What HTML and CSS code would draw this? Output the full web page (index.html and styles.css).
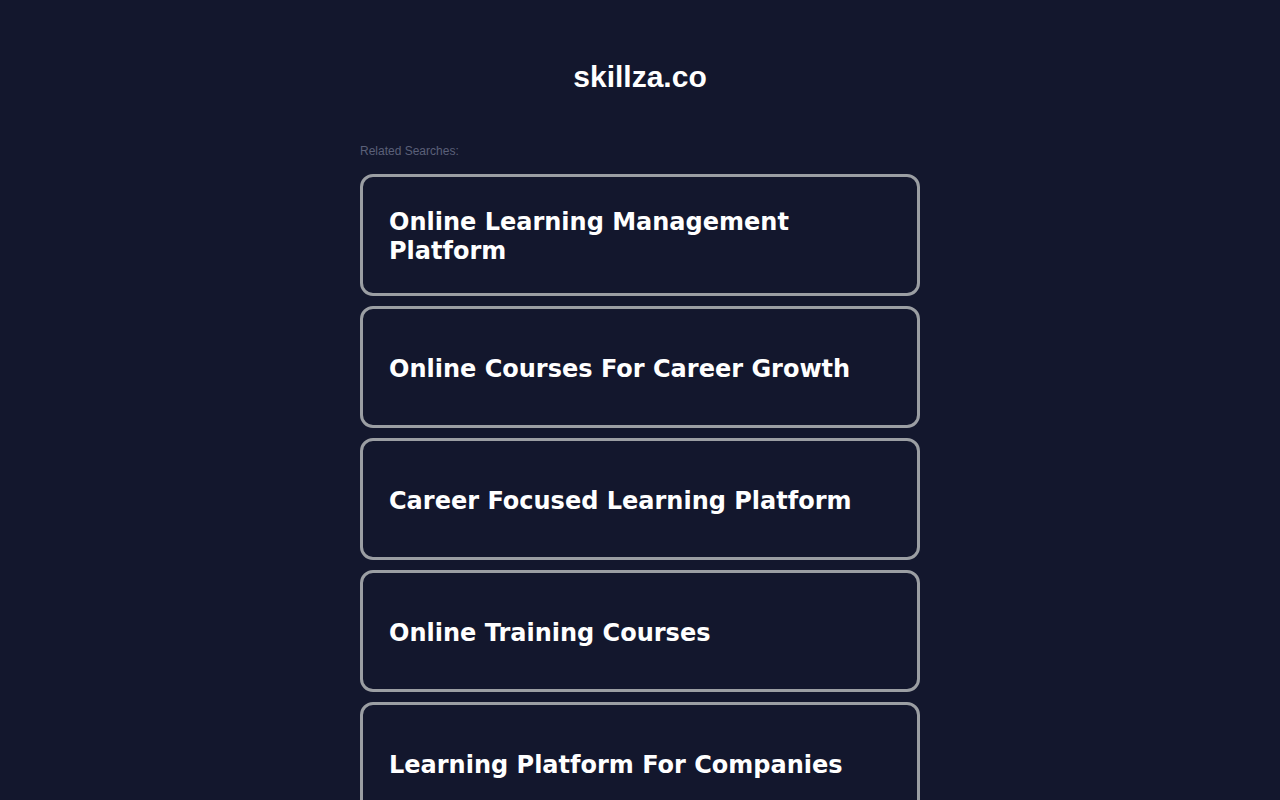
FILE: index.html
```html
<!DOCTYPE html>
<html lang="en">
<head>
  <meta charset="UTF-8" />
  <meta name="viewport" content="width=device-width, initial-scale=1.0"/>
  <title>skillza.co</title>
  <link rel="stylesheet" href="styles.css">
</head>
<body>
  <div class="page">
    <header>
      <h1>skillza.co</h1>
    </header>

    <p class="related">Related Searches:</p>

    <div class="links">
      <a class="link" href="#">Online Learning Management Platform</a>
      <a class="link" href="#">Online Courses For Career Growth</a>
      <a class="link" href="#">Career Focused Learning Platform</a>
      <a class="link" href="#">Online Training Courses</a>
      <a class="link" href="#">Learning Platform For Companies</a>
    </div>
  </div>
</body>
</html>
```

FILE: styles.css
```css
body {
  margin: 0;
  padding: 0;
  background-color: #13172d;
  color: #fff;
  font-family: 'Liberation Sans', Arial, sans-serif;
  min-height: 100vh;
}

.page {
  width: 560px;
  margin: 0 auto;
}

header {
  padding-top: 58px;
  text-align: center;
}

h1 {
  margin: 0;
  font-size: 30px;
  line-height: 38px;
  font-weight: bold;
}

.related {
  margin: 48px 0 0;
  font-size: 12px;
  line-height: 14px;
  color: #5b6079;
}

.links {
  margin-top: 16px;
  display: flex;
  flex-direction: column;
  gap: 10px;
}

.link {
  box-sizing: border-box;
  height: 122px;
  display: flex;
  align-items: center;
  padding: 4px 26px 0;
  border: 3px solid #9b9ea3;
  border-radius: 13px;
  color: #fff;
  text-decoration: none;
  font-family: 'DejaVu Sans', Verdana, sans-serif;
  font-weight: bold;
  font-size: 24px;
  line-height: 29px;
}
```
